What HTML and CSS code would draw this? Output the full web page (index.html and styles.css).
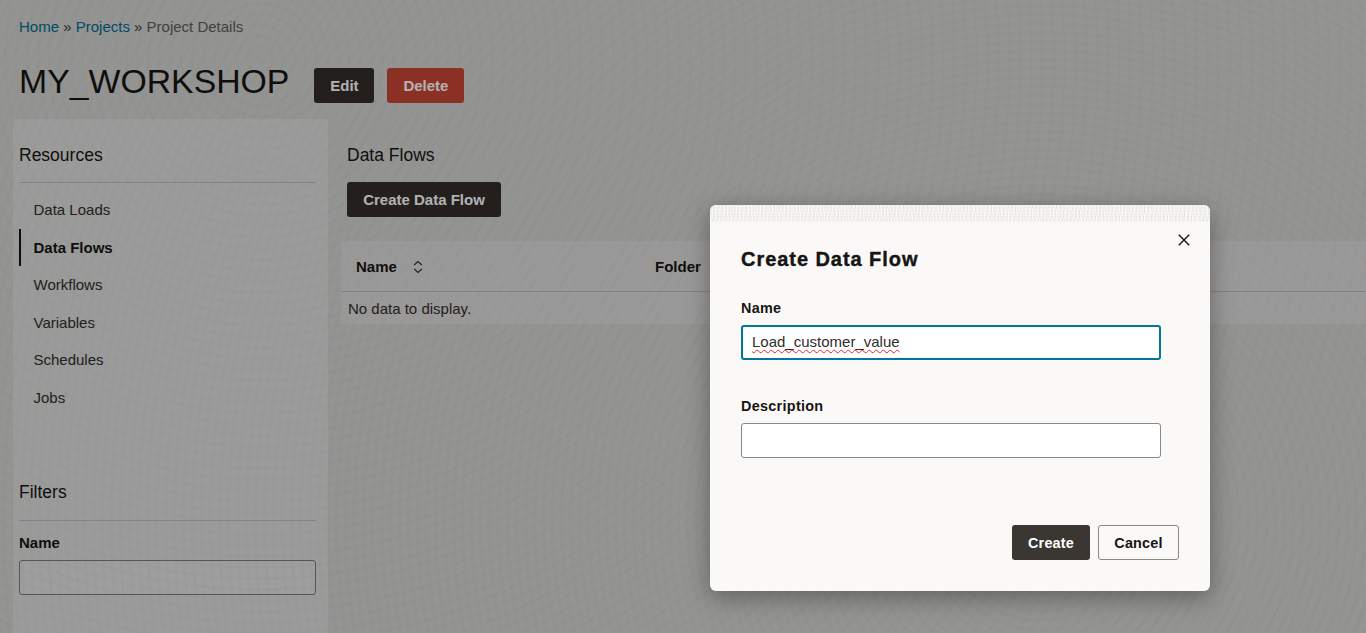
FILE: index.html
```html
<!DOCTYPE html>
<html lang="en">
<head>
<meta charset="utf-8">
<title>Project Details</title>
<link rel="stylesheet" href="styles.css">
</head>
<body>
<div class="page">
  <nav class="crumbs"><a href="#">Home</a> <span class="sep">»</span> <a href="#">Projects</a> <span class="sep">»</span> <span class="here">Project Details</span></nav>
  <header class="title-row">
    <h1>MY_WORKSHOP</h1>
    <button class="btn dark">Edit</button>
    <button class="btn danger">Delete</button>
  </header>
  <div class="columns">
    <aside class="sidebar">
      <h2 class="side-head">Resources</h2>
      <ul class="side-list">
        <li>Data Loads</li>
        <li class="active">Data Flows</li>
        <li>Workflows</li>
        <li>Variables</li>
        <li>Schedules</li>
        <li>Jobs</li>
      </ul>
      <h2 class="side-head filters">Filters</h2>
      <label class="filter-label">Name</label>
      <div class="filter-input"></div>
    </aside>
    <main class="content">
      <h2 class="content-head">Data Flows</h2>
      <button class="btn dark create-flow">Create Data Flow</button>
      <div class="table">
        <div class="thead">
          <span class="col-name">Name
            <svg class="sort" width="10" height="14" viewBox="0 0 10 14"><path d="M1.2 5 5 1.5 8.8 5M1.2 9 5 12.5 8.8 9" fill="none" stroke="currentColor" stroke-width="1.1"/></svg>
          </span>
          <span class="col-folder">Folder</span>
        </div>
        <div class="tbody">No data to display.</div>
      </div>
    </main>
  </div>
</div>
<div class="scrim"></div>
<section class="dialog">
  <div class="strip"></div>
  <svg class="close" width="12" height="12" viewBox="0 0 12 12"><path d="M.8.8l10.4 10.4M11.2.8.8 11.2" fill="none" stroke="#161513" stroke-width="1.4"/></svg>
  <h2 class="dialog-title">Create Data Flow</h2>
  <label class="field-label first">Name</label>
  <div class="field focused"><span class="typed">Load_customer_value</span></div>
  <label class="field-label second">Description</label>
  <div class="field"></div>
  <div class="actions">
    <button class="btn dialog-btn primary">Create</button>
    <button class="btn dialog-btn outline">Cancel</button>
  </div>
</section>
</body>
</html>
```
FILE: styles.css
```css
* { box-sizing: border-box; }
html, body { margin: 0; height: 633px; overflow: hidden; }
body {
  font-family: "Liberation Sans", Arial, sans-serif;
  color: #161513;
  background-color: #d5d4d2;
  background-image:
    repeating-radial-gradient(circle at 1040px 520px, rgba(0,0,0,.014) 0 3px, transparent 3px 9px),
    repeating-radial-gradient(circle at 260px 60px, rgba(0,0,0,.014) 0 3px, transparent 3px 11px);
}
.page { height: 633px; padding-left: 13px; }

.crumbs { padding: 18px 0 0 6px; height: 61px; font-size: 15px; line-height: 17px; color: #161513; }
.crumbs a { color: #006b8f; text-decoration: none; }
.crumbs .here { color: #5f5d5a; }
.crumbs .sep { color: #3e3b38; }

.title-row { display: flex; align-items: center; height: 41px; padding-left: 6px; margin-bottom: 17px; }
h1 { margin: 0 25px 0 0; font-size: 33.8px; font-weight: 400; line-height: 41px; color: #161513; }

.btn {
  font-family: inherit; font-size: 15px; font-weight: 700;
  height: 35px; border-radius: 3px; border: 0; padding: 0; color: #fff;
}
.dark { background: #312d2a; }
.danger { background: #c74634; width: 77px; margin-left: 13px; }
.title-row .dark { width: 60px; margin-top: 8px; }
.title-row .danger { margin-top: 8px; }

.columns { display: flex; }
.sidebar { width: 315px; height: 514px; padding: 0 12px 0 6px; background: rgba(255,255,255,.25); flex: none; }
.side-head { margin: 0; font-size: 17.5px; font-weight: 400; line-height: 20px; height: 64px; padding-top: 26px; border-bottom: 1px solid #bdbcb9; color: #161513; }
.side-list { list-style: none; margin: 8px 0 0; padding: 0; }
.side-list li { height: 37.5px; line-height: 37.5px; padding-left: 14.5px; font-size: 15px; color: #312d2a; }
.side-list .active { font-weight: 700; color: #161513; border-left: 2px solid #161513; padding-left: 12.5px; }
.filters { height: 39px; padding-top: 0; margin-top: 66px; }
.filter-label { display: block; margin-top: 13px; font-size: 15px; line-height: 17px; font-weight: 700; }
.filter-input { width: 297px; height: 35px; margin-top: 9px; border: 1px solid #7d7b79; border-radius: 3px; background: rgba(255,255,255,.1); }

.content { flex: 1; padding-left: 13px; }
.content-head { margin: 26px 0 0 6px; font-size: 17.5px; font-weight: 400; line-height: 20px; color: #161513; }
.create-flow { display: block; width: 154px; margin: 17px 0 0 6px; }
.table { margin-top: 24px; background: rgba(255,255,255,.2); font-size: 15px; }
.thead { height: 51px; padding-top: 1px; border-bottom: 1px solid #bdbcb9; display: flex; align-items: center; font-weight: 700; color: #161513; }
.col-name { width: 314px; padding-left: 15px; display: flex; align-items: center; flex: none; }
.sort { margin-left: 16px; color: #312d2a; }
.tbody { height: 32px; line-height: 34px; padding-left: 7px; color: #312d2a; }

.scrim { position: absolute; inset: 0; background: rgba(0,0,0,.3); }

.dialog {
  position: absolute; left: 710px; top: 205px; width: 500px; height: 386px;
  background: #fbf9f8; border-radius: 6px;
  padding: 0 31px;
  box-shadow: 0 6px 24px rgba(0,0,0,.35);
}
.strip {
  height: 17px; margin: 0 -31px; border-radius: 6px 6px 0 0;
  background-color: #efeeec;
  background-image:
    repeating-linear-gradient(0deg, rgba(255,255,255,.35) 0 1px, transparent 1px 3px),
    repeating-linear-gradient(96deg, rgba(0,0,0,.045) 0 1px, transparent 1px 4px),
    repeating-linear-gradient(84deg, rgba(255,255,255,.6) 0 1px, transparent 1px 3px);
}
.close { position: absolute; left: 468px; top: 29px; }
.dialog-title { margin: 26px 0 0; font-size: 20px; line-height: 23px; font-weight: 700; letter-spacing: .95px; -webkit-text-stroke: .4px #161513; color: #161513; }
.field-label { display: block; font-size: 14.4px; line-height: 17px; font-weight: 700; letter-spacing: .3px; color: #161513; }
.field-label.first { margin-top: 29px; }
.field-label.second { margin-top: 38px; }
.field {
  width: 420px; height: 35px; margin-top: 8px; background: #fff;
  border: 1px solid #8a8886; border-radius: 3px;
  font-size: 15px; line-height: 30px; padding-left: 9px; color: #312d2a;
}
.focused { border: 2px solid #04759c; }
.typed { text-decoration: underline wavy #e8242a 1.3px; text-underline-offset: 2px; }
.actions { display: flex; justify-content: flex-end; gap: 8px; margin: 67px 0 0; }
.dialog-btn { font-size: 14.4px; letter-spacing: .2px; }
.primary { width: 78px; background: #3a3632; }
.outline { width: 81px; background: transparent; border: 1px solid #8a8886; color: #161513; }
```
